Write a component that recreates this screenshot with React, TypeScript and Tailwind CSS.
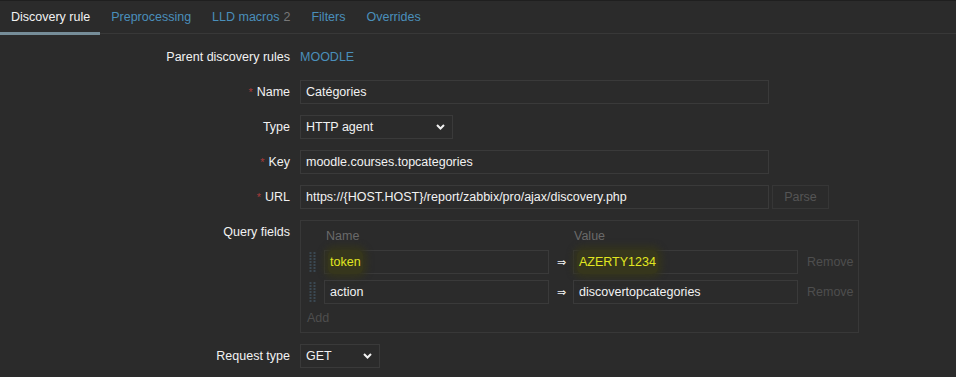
import React from "react"

const font = { fontFamily: '"Liberation Sans", Arial, sans-serif' }

function Chevron() {
  return (
    <svg width="9" height="6" viewBox="0 0 9 6" className="shrink-0">
      <path d="M1 1 L4.5 4.5 L8 1" fill="none" stroke="#f2f2f2" strokeWidth="2" />
    </svg>
  )
}

function Handle() {
  const dots = []
  for (let r = 0; r < 7; r++) {
    for (let c = 0; c < 2; c++) {
      dots.push(<rect key={`${r}-${c}`} x={c * 4} y={r * 3} width="2" height="2" fill="#3b4852" />)
    }
  }
  return (
    <svg width="7" height="21" viewBox="0 0 6 21" className="shrink-0">
      {dots}
    </svg>
  )
}

function Label({ children, required }: { children: React.ReactNode; required?: boolean }) {
  return (
    <div className="flex h-[24px] items-center justify-end text-[#f2f2f2]">
      {required && <span className="mr-[4px] text-[11px] text-[#a83a3a]">*</span>}
      {children}
    </div>
  )
}

function Input({ value, className = "w-[469px]" }: { value: string; className?: string }) {
  return (
    <div className={`flex h-[24px] items-center border border-[#3a3a3a] px-[5px] text-[#f2f2f2] ${className}`}>
      {value}
    </div>
  )
}

function Select({ value, width }: { value: string; width: string }) {
  return (
    <div className={`flex h-[24px] items-center justify-between border border-[#3a3a3a] pl-[5px] pr-[7px] text-[#f2f2f2] ${width}`}>
      <span>{value}</span>
      <Chevron />
    </div>
  )
}

function Highlight({ children }: { children: React.ReactNode }) {
  return (
    <span className="-mx-[2px] rounded-[6px] bg-[#36361c] px-[2px] py-[3px] text-[#e1e620] shadow-[0_0_6px_4px_#33331d]">
      {children}
    </span>
  )
}

function QueryRow({ name, value }: { name: React.ReactNode; value: React.ReactNode }) {
  return (
    <div className="flex h-[24px] items-center">
      <div className="ml-[8px] mr-[8px] flex w-[7px] justify-center">
        <Handle />
      </div>
      <div className="flex h-[24px] w-[225px] items-center border border-[#3a3a3a] px-[5px] text-[#f2f2f2]">{name}</div>
      <div className="flex w-[24px] justify-center text-[11px] text-[#f2f2f2]">⇒</div>
      <div className="flex h-[24px] w-[225px] items-center border border-[#3a3a3a] px-[5px] text-[#f2f2f2]">{value}</div>
      <span className="ml-[9px] text-[#4e4e4e]">Remove</span>
    </div>
  )
}

export default function App() {
  const tabs = ["Preprocessing", "LLD macros", "Filters", "Overrides"]
  return (
    <div className="h-[377px] w-[956px] overflow-hidden bg-[#2b2b2b] text-[12.5px]" style={font}>
      <div className="flex h-[34px] border-t border-b border-t-[#1f1f1f] border-b-[#383838]">
        <div className="mb-[-1px] flex h-[34px] items-center border-b-[3px] border-[#768d99] pl-[11px] pr-[10px] pt-[1px] text-[#f2f2f2]">
          Discovery rule
        </div>
        {tabs.map((t) => (
          <div key={t} className="flex items-center pl-[11px] pr-[10px] text-[#4a8fbb]">
            {t}
            {t === "LLD macros" && <span className="ml-[4px] text-[#787878]">2</span>}
          </div>
        ))}
      </div>

      <div className="grid grid-cols-[290px_1fr] gap-x-[10px] gap-y-[11px] pt-[11px]">
        <Label>Parent discovery rules</Label>
        <div className="flex h-[24px] items-center text-[#4a8fbb]">MOODLE</div>

        <Label required>Name</Label>
        <Input value="Catégories" />

        <Label>Type</Label>
        <Select value="HTTP agent" width="w-[153px]" />

        <Label required>Key</Label>
        <Input value="moodle.courses.topcategories" />

        <Label required>URL</Label>
        <div className="flex gap-[3px]">
          <Input value="https://{HOST.HOST}/report/zabbix/pro/ajax/discovery.php" />
          <div className="flex h-[24px] w-[57px] items-center justify-center border border-[#363636] text-[#555555]">Parse</div>
        </div>

        <Label>Query fields</Label>
        <div className="flex w-[559px] flex-col border border-[#383838] pt-[5px] pb-[4px]">
          <div className="flex h-[20px] items-center text-[#6a6a6a]">
            <span className="ml-[24px] w-[249px] pl-[1px]">Name</span>
            <span>Value</span>
          </div>
          <div className="mt-[4px]">
            <QueryRow name={<Highlight>token</Highlight>} value={<Highlight>AZERTY1234</Highlight>} />
          </div>
          <div className="mt-[6px]">
            <QueryRow name="action" value="discovertopcategories" />
          </div>
          <div className="mt-[4px] flex h-[20px] items-center pl-[6px] text-[#4e4e4e]">Add</div>
        </div>

        <Label>Request type</Label>
        <Select value="GET" width="w-[80px]" />
      </div>
    </div>
  )
}
